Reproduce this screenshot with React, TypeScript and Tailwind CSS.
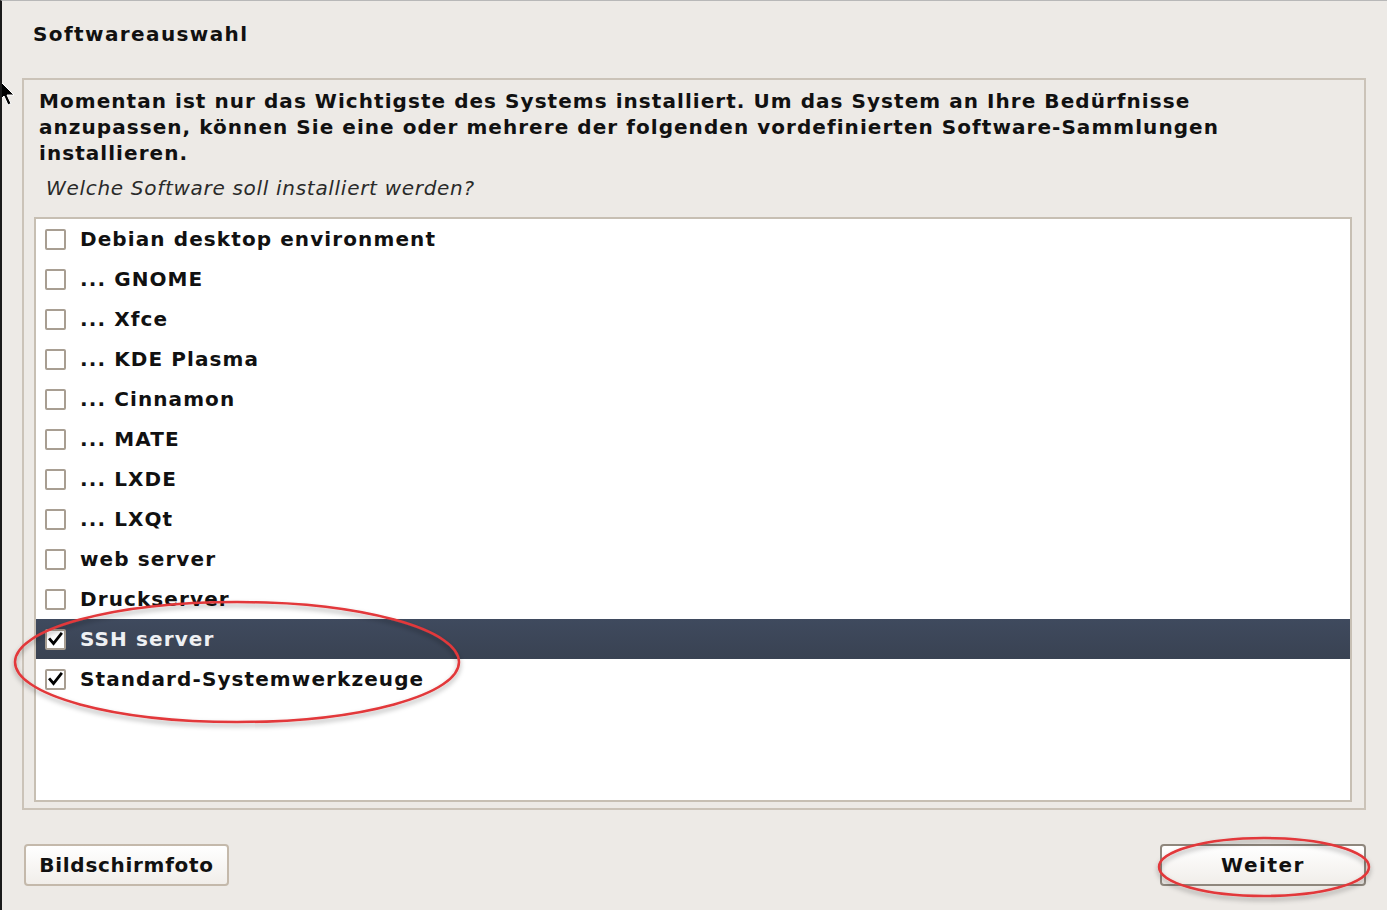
import React from "react";

const items = [
  { label: "Debian desktop environment", checked: false },
  { label: "... GNOME", checked: false },
  { label: "... Xfce", checked: false },
  { label: "... KDE Plasma", checked: false },
  { label: "... Cinnamon", checked: false },
  { label: "... MATE", checked: false },
  { label: "... LXDE", checked: false },
  { label: "... LXQt", checked: false },
  { label: "web server", checked: false },
  { label: "Druckserver", checked: false },
  { label: "SSH server", checked: true, selected: true },
  { label: "Standard-Systemwerkzeuge", checked: true },
];

function CheckBox({ checked }: { checked: boolean }) {
  return (
    <div className="w-[21px] h-[21px] shrink-0 border-2 border-[#a89e92] rounded-[2px] bg-white flex items-center justify-center">
      {checked && (
        <svg width="15" height="14" viewBox="0 0 15 14">
          <path d="M2 7.5 L5.5 11.5 L13 2" fill="none" stroke="#000" strokeWidth="2.8" strokeLinecap="square" strokeLinejoin="miter" />
        </svg>
      )}
    </div>
  );
}

export default function App() {
  return (
    <div
      className="relative w-[1387px] h-[910px] bg-[#edeae6] border-l-2 border-l-[#1a1a1a] border-t border-t-[#b8b8b8] overflow-hidden text-[#111]"
      style={{ fontFamily: '"DejaVu Sans", "Liberation Sans", sans-serif' }}
    >
      <div className="flex flex-col h-full">
        <div className="pl-[31px] pt-[20px] h-[77px] text-[20px] font-bold leading-[26px] tracking-[1.4px]">
          Softwareauswahl
        </div>
        <div className="ml-[20px] w-[1344px] h-[732px] border-2 border-[#cbc3b8] flex flex-col">
          <div className="pl-[15px] pt-[8px] text-[20px] font-bold leading-[26px] tracking-[1.05px]">
            Momentan ist nur das Wichtigste des Systems installiert. Um das System an Ihre Bedürfnisse
            <br />
            anzupassen, können Sie eine oder mehrere der folgenden vordefinierten Software-Sammlungen
            <br />
            installieren.
          </div>
          <div className="pl-[22px] pt-[9px] h-[51px] text-[20px] italic leading-[26px] tracking-[0.7px] text-[#2a2a2a]">
            Welche Software soll installiert werden?
          </div>
          <div className="ml-[10px] mr-[12px] mb-[6px] flex-1 border-2 border-[#c7bfb3] bg-white">
            {items.map((it) => (
              <div
                key={it.label}
                className={
                  "h-[40px] flex items-center gap-[14px] pl-[9px] text-[20px] font-bold tracking-[1.1px] " +
                  (it.selected ? "bg-gradient-to-b from-[#3f4a5e] to-[#394252] text-[#eef0f3]" : "text-[#111]")
                }
              >
                <CheckBox checked={it.checked} />
                <span className="leading-[26px]">{it.label}</span>
              </div>
            ))}
          </div>
        </div>
        <div className="flex justify-between pl-[22px] pr-[21px] pt-[34px]">
          <button className="w-[205px] h-[42px] rounded-[4px] border-2 border-[#c4b9ab] bg-gradient-to-b from-[#ffffff] to-[#f1eeea] text-[20px] font-bold tracking-[0.7px] text-[#111]">
            Bildschirmfoto
          </button>
          <button className="w-[206px] h-[42px] rounded-[4px] border-2 border-[#8f877d] bg-gradient-to-b from-[#ffffff] to-[#f1eeea] text-[20px] font-bold tracking-[1.5px] text-[#111]">
            Weiter
          </button>
        </div>
      </div>

      {/* red annotation ellipses */}
      <svg className="absolute left-0 top-0 pointer-events-none" width="1387" height="910">
        <defs>
          <filter id="sh" x="-10%" y="-20%" width="120%" height="140%">
            <feDropShadow dx="0" dy="3" stdDeviation="2.5" floodColor="#000" floodOpacity="0.35" />
          </filter>
        </defs>
        <ellipse cx="235" cy="661" rx="222" ry="60" fill="none" stroke="#e2383a" strokeWidth="2.5" filter="url(#sh)" />
        <ellipse cx="1262" cy="866" rx="105" ry="29" fill="none" stroke="#e2383a" strokeWidth="2.5" filter="url(#sh)" />
      </svg>

      {/* mouse cursor */}
      <svg className="absolute left-[-4px] top-[78px]" width="20" height="30" viewBox="0 0 20 30">
        <path d="M1 1 L1 22 L6 17 L10 26 L13 24.5 L9 16 L16 16 Z" fill="#000" stroke="#fff" strokeWidth="1" />
      </svg>
    </div>
  );
}
